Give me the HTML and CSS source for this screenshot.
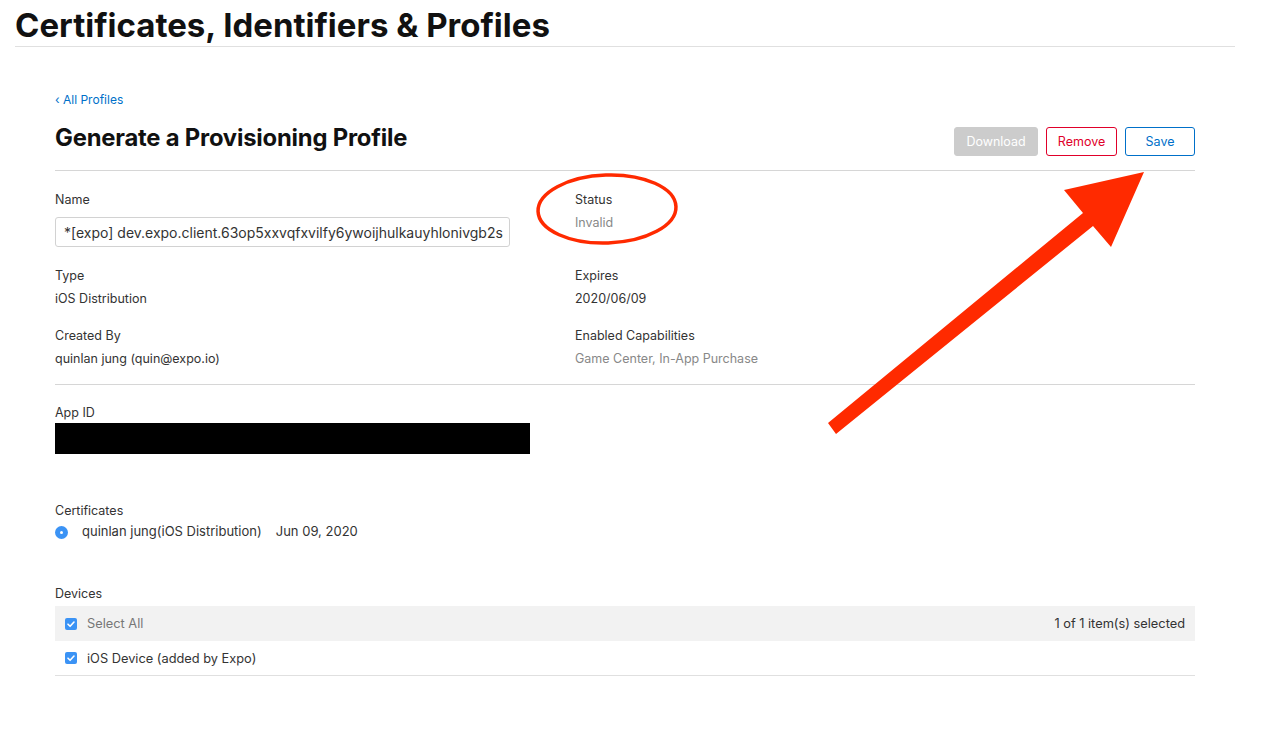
FILE: index.html
```html
<!DOCTYPE html>
<html>
<head>
<meta charset="utf-8">
<link rel="stylesheet" href="styles.css">
</head>
<body>
<header class="top">
  <h1 class="top-title">Certificates, Identifiers &amp; Profiles</h1>
</header>
<main class="content">
  <a class="back" href="#">‹ All Profiles</a>
  <div class="head">
    <h2 class="page-title">Generate a Provisioning Profile</h2>
    <div class="actions">
      <button class="btn btn-disabled">Download</button>
      <button class="btn btn-remove">Remove</button>
      <button class="btn btn-save">Save</button>
    </div>
  </div>
  <section class="grid">
    <div class="field">
      <div class="label">Name</div>
      <input class="name-input" type="text" value="*[expo] dev.expo.client.63op5xxvqfxvilfy6ywoijhulkauyhlonivgb2s">
    </div>
    <div class="field">
      <div class="label">Status</div>
      <div class="value muted">Invalid</div>
    </div>
    <div class="field">
      <div class="label">Type</div>
      <div class="value">iOS Distribution</div>
    </div>
    <div class="field">
      <div class="label">Expires</div>
      <div class="value">2020/06/09</div>
    </div>
    <div class="field">
      <div class="label">Created By</div>
      <div class="value">quinlan jung (quin@expo.io)</div>
    </div>
    <div class="field">
      <div class="label">Enabled Capabilities</div>
      <div class="value muted">Game Center, In-App Purchase</div>
    </div>
  </section>
  <section class="appid">
    <div class="label">App ID</div>
    <div class="redacted"></div>
  </section>
  <section class="certs">
    <div class="label">Certificates</div>
    <div class="cert-row">
      <span class="radio"></span>
      <span class="cert-name">quinlan jung(iOS Distribution)</span>
      <span class="cert-date">Jun 09, 2020</span>
    </div>
  </section>
  <section class="devices">
    <div class="label">Devices</div>
    <div class="dev-head">
      <label class="check-label"><span class="check"><svg viewBox="0 0 12 12" width="12" height="12"><path d="M3 6.2 L5.1 8.3 L9 4" fill="none" stroke="#fff" stroke-width="1.6" stroke-linecap="round" stroke-linejoin="round"/></svg></span><span class="sel-all">Select All</span></label>
      <span class="count">1 of 1 item(s) selected</span>
    </div>
    <div class="dev-row">
      <label class="check-label"><span class="check"><svg viewBox="0 0 12 12" width="12" height="12"><path d="M3 6.2 L5.1 8.3 L9 4" fill="none" stroke="#fff" stroke-width="1.6" stroke-linecap="round" stroke-linejoin="round"/></svg></span><span class="dev-name">iOS Device (added by Expo)</span></label>
    </div>
  </section>
</main>
<svg class="annot" width="1262" height="732" viewBox="0 0 1262 732">
  <ellipse cx="607" cy="209" rx="69" ry="34" fill="none" stroke="#ff2a00" stroke-width="3.5" transform="rotate(-2 607 209)"/>
  <polygon points="1144,172 1111,247 1093,226 836,434 828,423 1083,213 1064,190" fill="#ff2a00"/>
</svg>
</body>
</html>
```
FILE: styles.css
```css
* { box-sizing: border-box; }
html, body { margin: 0; padding: 0; background: #fff; }
body {
  font-family: Inter, "Noto Sans", "Liberation Sans", sans-serif;
  color: #333;
  width: 1262px;
  height: 732px;
  overflow: hidden;
  position: relative;
}
.top {
  margin: 0 27px 0 15px;
  border-bottom: 1px solid #e0e0e0;
  height: 47px;
}
.top-title {
  margin: 0;
  padding-top: 6px;
  font-size: 33px;
  font-weight: 700;
  letter-spacing: 0;
  color: #111;
  line-height: 38px;
}
.content {
  margin: 0 0 0 55px;
  width: 1140px;
  padding-top: 45px;
}
.back {
  display: block;
  font-size: 12px;
  color: #0070c9;
  text-decoration: none;
  line-height: 16px;
}
.head {
  display: flex;
  justify-content: space-between;
  align-items: flex-start;
  margin-top: 19px;
  border-bottom: 1px solid #d6d6d6;
  height: 44px;
}
.page-title {
  margin: 0;
  font-size: 23.8px;
  font-weight: 700;
  color: #111;
  line-height: 22px;
  letter-spacing: -0.2px;
}
.actions {
  display: flex;
  gap: 8px;
}
.btn {
  font-family: inherit;
  font-size: 12.5px;
  height: 29px;
  border-radius: 3px;
  background: #fff;
  padding: 0;
}
.btn-disabled {
  width: 84px;
  background: #cccccc;
  border: 1px solid #cccccc;
  color: #fff;
}
.btn-remove {
  width: 71px;
  border: 1px solid #e0002a;
  color: #e0002a;
}
.btn-save {
  width: 70px;
  border: 1px solid #0070c9;
  color: #0070c9;
}
.grid {
  display: grid;
  grid-template-columns: 520px 1fr;
  row-gap: 21px;
  padding-top: 21px;
  padding-bottom: 17px;
  border-bottom: 1px solid #d6d6d6;
}
.label {
  font-size: 12.5px;
  line-height: 16px;
  color: #333;
}
.value {
  font-size: 12.5px;
  line-height: 16px;
  margin-top: 7px;
  color: #333;
}
.value.muted { color: #888; }
.name-input {
  margin-top: 9px;
  width: 455px;
  height: 30px;
  border: 1px solid #d2d2d2;
  border-radius: 3px;
  padding: 0 0 0 8px;
  font-family: inherit;
  font-size: 14px;
  color: #333;
}
.appid { padding-top: 20px; }
.redacted {
  margin-top: 2px;
  width: 475px;
  height: 31px;
  background: #000;
}
.certs { margin-top: 49px; }
.cert-row {
  display: flex;
  align-items: center;
  margin-top: 4px;
  font-size: 13px;
  color: #333;
}
.radio {
  width: 13px;
  height: 13px;
  border-radius: 50%;
  background: #3b93f5;
  position: relative;
  margin-top: 3px;
  margin-right: 14px;
}
.radio::after {
  content: "";
  position: absolute;
  left: 5px;
  top: 5px;
  width: 3px;
  height: 3px;
  border-radius: 50%;
  background: #fff;
}
.cert-date { margin-left: 14px; }
.devices { margin-top: 47px; }
.dev-head {
  margin-top: 4px;
  background: #f2f2f2;
  height: 35px;
  display: flex;
  justify-content: space-between;
  align-items: center;
  padding: 0 10px;
  font-size: 12.8px;
}
.check-label { display: flex; align-items: center; }
.check {
  width: 12px;
  height: 12px;
  border-radius: 2px;
  background: #3b93f5;
  display: inline-flex;
  margin-right: 10px;
}
.sel-all { color: #777; }
.count { color: #333; }
.dev-row {
  height: 35px;
  display: flex;
  align-items: center;
  padding: 0 10px;
  border-bottom: 1px solid #e0e0e0;
  font-size: 12.8px;
}
.annot {
  position: absolute;
  left: 0;
  top: 0;
  pointer-events: none;
}
```
